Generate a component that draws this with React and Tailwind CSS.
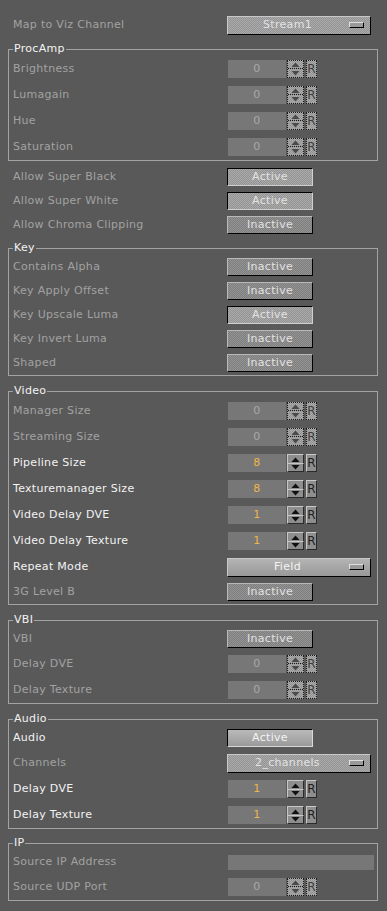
import React from "react";

const dimLight =
  "bg-[repeating-conic-gradient(#ababab_0%_25%,#939393_0%_50%)] bg-[length:2px_2px]";
const dimDark =
  "bg-[repeating-conic-gradient(#949494_0%_25%,#7e7e7e_0%_50%)] bg-[length:2px_2px]";

const Label = ({ children, on }) => (
  <div className={`w-[214px] ${on ? "text-[#f2f2f2]" : "text-[#a2a2a2]"}`}>
    {children}
  </div>
);

const Arrow = ({ up, on }) => (
  <svg width="9" height="5" viewBox="0 0 9 5">
    <path
      d={up ? "M0.5 5 L4.5 0.5 L8.5 5 Z" : "M0.5 0 L4.5 4.5 L8.5 0 Z"}
      fill={on ? "#111" : "#4a4a4a"}
    />
  </svg>
);

const NumField = ({ value, on }) => (
  <div className="ml-px flex h-[18px] items-stretch">
    <div
      className={`flex w-[58px] items-center justify-center bg-[#777777] ${
        on ? "text-[#f0b449]" : "text-[#a8a8a8]"
      }`}
    >
      {value}
    </div>
    {on ? (
      <>
        <div className="ml-px flex w-[17px] flex-col">
          <div className="flex h-[9px] items-center justify-center border-t border-l border-[#c8c8c8] border-r border-r-[#2a2a2a] bg-[#8e8e8e]">
            <Arrow up on />
          </div>
          <div className="flex h-[9px] items-center justify-center border border-t-[#c8c8c8] border-l-[#c8c8c8] border-r-[#2a2a2a] border-b-[#2a2a2a] bg-[#8e8e8e]">
            <Arrow on />
          </div>
        </div>
        <div className="ml-[2px] flex w-[11px] items-center justify-center border border-t-[#c8c8c8] border-l-[#c8c8c8] border-r-[#2a2a2a] border-b-[#2a2a2a] bg-[#8e8e8e] text-[12px] leading-none tracking-normal text-[#1d1d1d]">
          R
        </div>
      </>
    ) : (
      <>
        <div className={`ml-px flex w-[17px] flex-col border border-dotted border-[#1a1a1a] ${dimLight}`}>
          <div className="flex h-[8px] items-center justify-center border-b border-dotted border-[#1a1a1a]">
            <Arrow up />
          </div>
          <div className="flex flex-1 items-center justify-center">
            <Arrow />
          </div>
        </div>
        <div
          className={`ml-[2px] flex w-[11px] items-center justify-center border border-dotted border-[#1a1a1a] text-[12px] leading-none tracking-normal text-[#3e3e3e] ${dimLight}`}
        >
          R
        </div>
      </>
    )}
  </div>
);

const Toggle = ({ text, active, solid }) => {
  if (solid) {
    return (
      <div className="flex h-[18px] w-[86px] items-center justify-center border border-t-black border-l-black border-r-[#d8d8d8] border-b-[#d8d8d8] bg-gradient-to-b from-[#bababa] to-[#9a9a9a] text-[#f4f4f4]">
        {text}
      </div>
    );
  }
  return (
    <div
      className={`flex h-[18px] w-[86px] items-center justify-center border text-[#e2e2e2] ${
        active
          ? `border-t-black border-l-black border-r-[#d0d0d0] border-b-[#d0d0d0] ${dimLight}`
          : `border-t-[#b8b8b8] border-l-[#b8b8b8] border-r-black border-b-black ${dimDark}`
      }`}
    >
      {text}
    </div>
  );
};

const Dropdown = ({ text, on }) => (
  <div
    className={`flex h-[19px] w-[144px] items-center border border-t-[#c8c8c8] border-l-[#c8c8c8] border-r-black border-b-black ${
      on ? "bg-gradient-to-b from-[#b4b4b4] to-[#989898] text-[#f4f4f4]" : `${dimLight} text-[#e2e2e2]`
    }`}
  >
    <div className="flex-1 pl-[8px] text-center">{text}</div>
    <div className="mr-[6px] ml-[10px] h-[6px] w-[15px] border border-t-[#e0e0e0] border-l-[#e0e0e0] border-r-black border-b-black bg-[#9a9a9a]" />
  </div>
);

const Row = ({ h = 26, children }) => (
  <div className={`flex items-center ${h === 24 ? "h-[24px]" : "h-[26px]"}`}>{children}</div>
);

const Group = ({ title, className = "", children }) => (
  <fieldset className={`ml-[8px] w-[370px] border border-[#a3a3a3] pl-[4px] ${className}`}>
    <legend className="px-[1px] text-[11px] leading-[14px] text-[#f2f2f2]">{title}</legend>
    {children}
  </fieldset>
);

export default function App() {
  return (
    <div className="h-[911px] w-[387px] overflow-hidden bg-[#595959] pt-[13px] font-['DejaVu_Sans',sans-serif] text-[11px] tracking-[0.3px]">
      <div className="flex h-[24px] items-center pl-[13px]">
        <Label>Map to Viz Channel</Label>
        <Dropdown text="Stream1" />
      </div>

      <Group title="ProcAmp" className="mt-[5px]">
        <Row>
          <Label>Brightness</Label>
          <NumField value="0" />
        </Row>
        <Row>
          <Label>Lumagain</Label>
          <NumField value="0" />
        </Row>
        <Row>
          <Label>Hue</Label>
          <NumField value="0" />
        </Row>
        <Row>
          <Label>Saturation</Label>
          <NumField value="0" />
        </Row>
      </Group>

      <div className="mt-[4px] pl-[13px]">
        <Row h={24}>
          <Label>Allow Super Black</Label>
          <Toggle text="Active" active />
        </Row>
        <Row h={24}>
          <Label>Allow Super White</Label>
          <Toggle text="Active" active />
        </Row>
        <Row h={24}>
          <Label>Allow Chroma Clipping</Label>
          <Toggle text="Inactive" />
        </Row>
      </div>

      <Group title="Key" className="mt-[4px]">
        <Row h={24}>
          <Label>Contains Alpha</Label>
          <Toggle text="Inactive" />
        </Row>
        <Row h={24}>
          <Label>Key Apply Offset</Label>
          <Toggle text="Inactive" />
        </Row>
        <Row h={24}>
          <Label>Key Upscale Luma</Label>
          <Toggle text="Active" active />
        </Row>
        <Row h={24}>
          <Label>Key Invert Luma</Label>
          <Toggle text="Inactive" />
        </Row>
        <Row h={24}>
          <Label>Shaped</Label>
          <Toggle text="Inactive" />
        </Row>
      </Group>

      <Group title="Video" className="mt-[8px]">
        <Row>
          <Label>Manager Size</Label>
          <NumField value="0" />
        </Row>
        <Row>
          <Label>Streaming Size</Label>
          <NumField value="0" />
        </Row>
        <Row>
          <Label on>Pipeline Size</Label>
          <NumField value="8" on />
        </Row>
        <Row>
          <Label on>Texturemanager Size</Label>
          <NumField value="8" on />
        </Row>
        <Row>
          <Label on>Video Delay DVE</Label>
          <NumField value="1" on />
        </Row>
        <Row>
          <Label on>Video Delay Texture</Label>
          <NumField value="1" on />
        </Row>
        <Row>
          <Label on>Repeat Mode</Label>
          <Dropdown text="Field" on />
        </Row>
        <Row h={24}>
          <Label>3G Level B</Label>
          <Toggle text="Inactive" />
        </Row>
      </Group>

      <Group title="VBI" className="mt-[8px]">
        <Row h={24}>
          <Label>VBI</Label>
          <Toggle text="Inactive" />
        </Row>
        <Row>
          <Label>Delay DVE</Label>
          <NumField value="0" />
        </Row>
        <Row>
          <Label>Delay Texture</Label>
          <NumField value="0" />
        </Row>
      </Group>

      <Group title="Audio" className="mt-[8px]">
        <Row h={24}>
          <Label on>Audio</Label>
          <Toggle text="Active" solid />
        </Row>
        <Row>
          <Label>Channels</Label>
          <Dropdown text="2_channels" />
        </Row>
        <Row>
          <Label on>Delay DVE</Label>
          <NumField value="1" on />
        </Row>
        <Row>
          <Label on>Delay Texture</Label>
          <NumField value="1" on />
        </Row>
      </Group>

      <Group title="IP" className="mt-[7px]">
        <Row h={24}>
          <Label>Source IP Address</Label>
          <div className="ml-px h-[15px] w-[146px] bg-[#777777]" />
        </Row>
        <Row>
          <Label>Source UDP Port</Label>
          <NumField value="0" />
        </Row>
      </Group>
    </div>
  );
}
